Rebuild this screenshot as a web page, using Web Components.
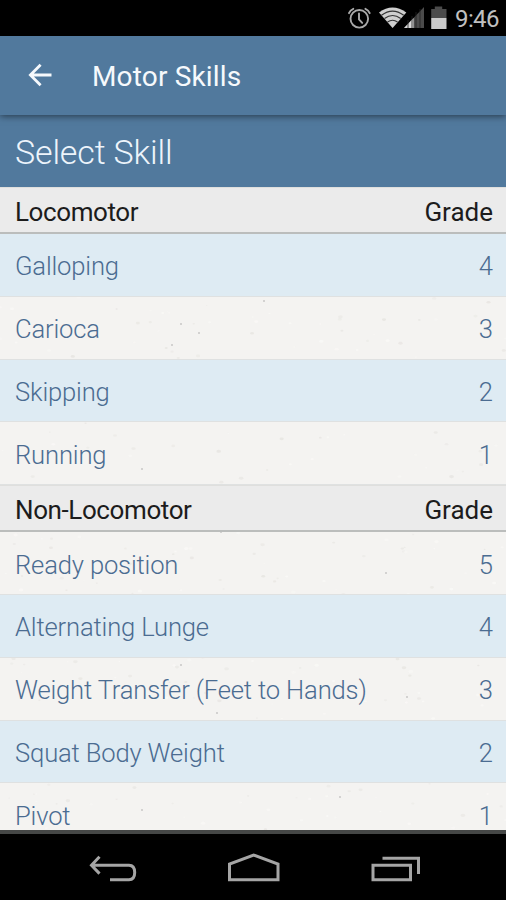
<!DOCTYPE html>
<html lang="en">
<head>
<meta charset="utf-8">
<title>Motor Skills</title>
<style>
html,body{margin:0;height:100%;background:#000}
body{font-family:Roboto,"Liberation Sans",sans-serif;overflow:hidden}
</style>
</head>
<body>
<skills-app></skills-app>
<script>
const define = (name, html, setup) => customElements.define(name, class extends HTMLElement {
  connectedCallback() {
    if (this.shadowRoot) return;
    this.attachShadow({mode: 'open'}).innerHTML = html;
    if (setup) setup(this);
  }
});

define('status-bar', `
<style>
:host{display:flex;height:36px;flex:none;background:#000;color:#c0c0c0;justify-content:flex-end;align-items:center;padding-right:8px;box-sizing:border-box}
svg{display:block;flex:none}
span{font-size:24px;line-height:34px;margin-left:8px;width:43px;white-space:nowrap;letter-spacing:-.6px;padding-top:2px}
</style>
<svg width="100" height="36" viewBox="347 0 100 36">
  <g fill="none" stroke="#a9a9a9" stroke-width="1.900" stroke-linecap="round">
    <circle cx="359.300" cy="18.800" r="8.800"/>
    <path d="M359 13.500v5.800l3.200 3.600M349 13.200q1.200-3.200 4.300-4.400M369.700 13.200q-1.200-3.200-4.300-4.400"/>
  </g>
  <path d="M379 12.500Q392.500 2.500 406.300 12.500L392.600 28Z" fill="#cfcfcf"/>
  <g fill="none" stroke="#333" stroke-width="1.200">
    <path d="M381.500 15.200Q392.600 7 403.700 15.200M384.500 18.500Q392.600 12.500 400.700 18.500M387.500 22Q392.600 18.500 397.500 22"/>
  </g>
  <path d="M404 28L424 7V28Z" fill="#4b4b4b"/>
  <path d="M404 28L413.500 18V28Z" fill="#d8d8d8"/>
  <path d="M408 20v8M412 16v12M416 12v16M420 9v19" stroke="#222" stroke-width=".8"/>
  <path d="M431.200 9h3.600V6.500h7.400V9h4.300V18h-15.300Z" fill="#4b4b4b"/>
  <path d="M431.200 18h15.300v11h-15.300Z" fill="#cacaca"/>
</svg><span>9:46</span>`);

define('app-bar', `
<style>
:host{display:flex;position:relative;z-index:1;height:79px;flex:none;align-items:center;background:#51799d;color:#f6f9fc;padding-left:28px;box-sizing:border-box;box-shadow:0 1px 7px rgba(0,0,0,.55)}
svg{display:block;margin:0 40px 2px 0}
h1{margin:0;padding-top:2px;font-size:28px;font-weight:400;line-height:34px;letter-spacing:.16px}
</style>
<svg width="24" height="24" viewBox="0 0 24 24" fill="none" stroke="#f6f9fc" stroke-width="2.800"><path d="M23.500 12H2.500M12.600 1.800L2.400 12l10.200 10.200"/></svg>
<h1><slot></slot></h1>`);

define('page-heading', `
<style>
:host{display:flex;height:72px;flex:none;align-items:center;background:#51799d;color:#edf4fb;padding:2px 15px 0;box-sizing:border-box}
h2{margin:0;font-size:34px;font-weight:300;line-height:39px;letter-spacing:-.17px}
</style><h2><slot></slot></h2>`);

define('section-header', `
<style>
:host{display:flex;height:47px;flex:none;align-items:center;justify-content:space-between;background:#ebebeb;color:#1c1c1c;padding:3px 13px 0 15px;box-sizing:border-box;font-size:26px;line-height:32px;border-bottom:2px solid #bbbdbc;border-top:1px solid #dfdfdd}
.label{letter-spacing:-.4px}
</style><span class="label"><slot></slot></span><span>Grade</span>`);

define('skill-row', `
<style>
:host{display:flex;height:62.800px;flex:none;align-items:center;justify-content:space-between;color:#4b6c91;padding:3px 13px 0 15px;box-sizing:border-box;font-size:25.600px;font-weight:300;line-height:32px;border-bottom:1px solid #dfe1e1}
:host([tinted]){background:#deebf3}
.label{letter-spacing:-.16px}
</style><span class="label"><slot></slot></span><span><slot name="grade"></slot></span>`);

define('skill-list', `
<style>
:host{display:block;position:relative;height:643px;flex:none;overflow:hidden;background:#f4f3f1}
.paper{position:absolute;inset:0}
.items{position:relative;display:flex;flex-direction:column}
</style>
<svg class="paper" width="506" height="643"></svg>
<div class="items"><slot></slot></div>`, host => {
  const svg = host.shadowRoot.querySelector('svg');
  let seed = 17;
  const rand = () => (seed = (seed * 16807) % 2147483647) / 2147483647;
  let marks = '';
  for (let i = 0; i < 500; i++) {
    const x = rand() * 506, y = rand() * 643, r = .5 + rand() * 1.100;
    const light = rand() > .5;
    marks += `<ellipse cx="${x}" cy="${y}" rx="${r * 1.500}" ry="${r}" fill="${light ? '#fbfaf8' : '#e4e2de'}" opacity="${.3 + rand() * .4}"/>`;
  }
  for (const [x, y] of [[264,114],[181,137],[199,146],[172,158],[142,282],[221,345],[181,478],[217,526],[142,623],[340,610],[386,386],[407,510]])
    marks += `<circle cx="${x}" cy="${y}" r="1" fill="#aaa" opacity=".6"/>`;
  svg.innerHTML = marks;
});

define('navigation-bar', `
<style>
:host{display:block;flex:none;height:70px;background:#000;border-top:4px solid #454746;box-sizing:border-box}
svg{display:block}
</style>
<svg width="506" height="66" viewBox="0 834 506 66" fill="none" stroke="#a5a5a5" stroke-width="3">
  <path d="M110 879.700H129Q134.700 879.700 134.700 872.500T129 865.200H92M99.500 856.800L91.500 865.200L99.500 873.600"/>
  <path d="M229.500 879.800V864L253.600 855L278 864V879.800Z"/>
  <path d="M373 865.200H410.500V879.800H373ZM382.500 858.200H418.500V874"/>
</svg>`);

define('skills-app', `
<style>:host{display:flex;flex-direction:column;width:506px;height:900px;overflow:hidden}</style>
<status-bar></status-bar>
<app-bar>Motor Skills</app-bar>
<page-heading>Select Skill</page-heading>
<skill-list>
  <section-header>Locomotor</section-header>
  <skill-row tinted>Galloping<span slot="grade">4</span></skill-row>
  <skill-row>Carioca<span slot="grade">3</span></skill-row>
  <skill-row tinted>Skipping<span slot="grade">2</span></skill-row>
  <skill-row>Running<span slot="grade">1</span></skill-row>
  <section-header>Non-Locomotor</section-header>
  <skill-row>Ready position<span slot="grade">5</span></skill-row>
  <skill-row tinted>Alternating Lunge<span slot="grade">4</span></skill-row>
  <skill-row>Weight Transfer (Feet to Hands)<span slot="grade">3</span></skill-row>
  <skill-row tinted>Squat Body Weight<span slot="grade">2</span></skill-row>
  <skill-row>Pivot<span slot="grade">1</span></skill-row>
</skill-list>
<navigation-bar></navigation-bar>`);
</script>
</body>
</html>
